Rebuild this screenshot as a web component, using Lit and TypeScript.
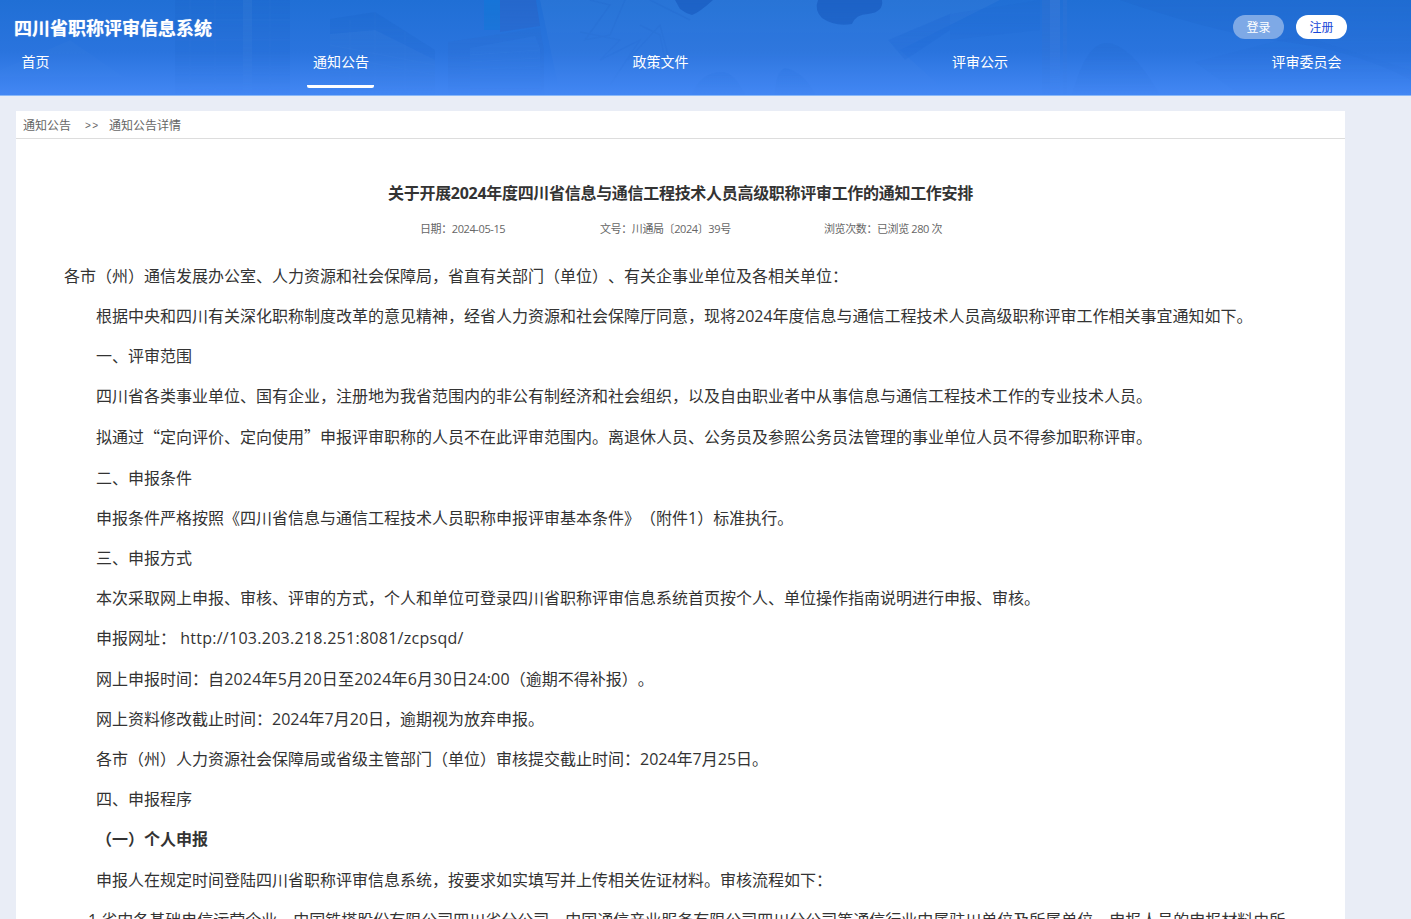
import { LitElement, html, css, svg } from "lit";
import { customElement } from "lit/decorators.js";

const art = svg`
<svg class="art" viewBox="0 0 1411 95" preserveAspectRatio="none" aria-hidden="true">
  <defs>
    <linearGradient id="fade" x1="0" y1="0" x2="0" y2="1">
      <stop offset="0" stop-color="#fff"/>
      <stop offset=".55" stop-color="#fff" stop-opacity=".6"/>
      <stop offset="1" stop-color="#fff" stop-opacity="0"/>
    </linearGradient>
    <mask id="m"><rect width="1411" height="95" fill="url(#fade)"/></mask>
  </defs>
  <g mask="url(#m)">
    <path d="M540 0 H1000 L900 50 L950 95 H560Z" fill="#fff" fill-opacity=".04"/>
    <path d="M0 70 L70 40 L150 95 H0Z" fill="#fff" fill-opacity=".025"/>
    <path d="M175 0 H290 V95 H175Z" fill="#1a5fc4" fill-opacity=".2"/>
    <path d="M243 0 H252 V95 H243Z" fill="#fff" fill-opacity=".04"/>
    <path d="M330 19 L375 12 L435 50 V95 H330Z" fill="#1a5fc4" fill-opacity=".24"/>
    <path d="M330 34 L375 30 L435 60 V95 H330Z" fill="#fff" fill-opacity=".04"/>
    <path d="M448 42 L540 28 L544 50 V95 H448Z" fill="#2a66c8" fill-opacity=".25"/>
    <path d="M470 48 L535 36 L540 48 L541 95 H470Z" fill="#3c85ea" fill-opacity=".22"/>
    <path d="M484 0 H500 V30 H484Z" fill="#0f78d8" fill-opacity=".55"/>
    <path d="M500 0 H536 L540 26 L500 32Z" fill="#2c5fc0" fill-opacity=".45"/>
    <path d="M675 0 H713 Q700 12 692 15 Q685 13 680 9Z" fill="#1a5cc0" fill-opacity=".75"/>
    <path d="M818 0 H882 Q884 12 868 14 Q856 14 852 24 Q835 27 822 18 Q814 10 818 0Z" fill="#1a5cc0" fill-opacity=".75"/>
    <path d="M888 40 L950 14 V30 L905 60Z" fill="#1a65d0" fill-opacity=".3"/>
    <path d="M950 14 L1040 0 V30 L950 40Z" fill="#1a65d0" fill-opacity=".14"/>
    <path d="M1120 0 Q1200 28 1270 40 Q1350 48 1411 80 V0Z" fill="#1a5fc4" fill-opacity=".18"/>
    <path d="M1042 0 H1050 V95 H1042Z" fill="#3f70c8" fill-opacity=".22"/>
    <path d="M1050 0 H1060 V95 H1050Z" fill="#5a85d8" fill-opacity=".28"/>
    <path d="M1063 0 H1067 V95 H1063Z" fill="#4a7ad0" fill-opacity=".18"/>
    <path d="M1072 95 Q1085 45 1105 43 Q1130 42 1160 95Z" fill="#1a5fc4" fill-opacity=".22"/>
    <path d="M1195 62 L1300 35 L1411 70 V95 H1240Z" fill="#1a5fc4" fill-opacity=".08"/>
    <path d="M692 95 Q700 72 722 72 Q735 72 745 95Z" fill="#1f68cf" fill-opacity=".3"/>
    <path d="M775 95 Q775 72 785 68 Q805 72 815 95Z" fill="#1f68cf" fill-opacity=".3"/>
    <g fill="none" stroke="#1d5fc0" stroke-opacity=".14" stroke-width="1.5">
      <path d="M590 0 L610 5 L585 40 L610 35 L625 0 M580 32 L620 40 L600 60 L640 40 L610 85 M650 0 L690 20 M640 25 L660 35 L665 60 M628 60 L660 25 L668 55 L640 70"/>
    </g>
    <g fill="none" stroke="#fff" stroke-opacity=".025">
      <path d="M190 0 V95 M215 0 V95 M270 0 V95 M175 20 H290 M175 40 H290 M175 60 H290 M350 20 V95 M375 12 V95 M405 32 V95 M330 45 L435 65 M330 55 L435 75 M470 55 L540 50 M470 62 L540 58 M470 70 L540 66"/>
    </g>
  </g>
</svg>`;

@customElement("app-root")
export class AppRoot extends LitElement {
  static styles = css`
    :host {
      display: block;
      height: 919px;
      overflow: hidden;
      background: #e9edf6;
      font-family: "Open Sans", "Noto Sans CJK SC", sans-serif;
      text-spacing-trim: space-all;
      color: #333;
    }
    .head {
      position: relative;
      height: 96px;
      box-sizing: border-box;
      border-bottom: 1px solid #8ab8f7;
      background: linear-gradient(180deg, #206fd5 0%, #2a74de 55%, #4387f4 100%);
      color: #fff;
      overflow: hidden;
    }
    .art { position: absolute; inset: 0; width: 100%; height: 100%; }
    .top {
      position: relative;
      display: flex;
      justify-content: space-between;
      padding: 15px 64px 0 14px;
      height: 40px;
      box-sizing: border-box;
    }
    .brand {
      font-family: "Noto Sans CJK SC", sans-serif;
      font-size: 18px;
      font-weight: 700;
      line-height: 26px;
      height: 26px;
      margin-top: -1px;
      text-shadow: 0 0 1px rgba(255, 255, 255, 0.6);
    }
    .auth { display: flex; gap: 12px; }
    .btn {
      width: 51px;
      height: 24px;
      border-radius: 12px;
      font-family: "Noto Sans CJK SC", sans-serif;
      font-size: 12px;
      line-height: 24px;
      text-align: center;
    }
    .login { background: #7ea9e6; color: #fff; }
    .reg { background: #fff; color: #1848d8; }
    .nav {
      position: relative;
      display: flex;
      justify-content: space-between;
      padding: 0 64.5px 0 15.5px;
      height: 48px;
      box-sizing: border-box;
    }
    .nav a {
      font-family: "Noto Sans CJK SC", sans-serif;
      font-size: 14px;
      line-height: 42px;
      padding: 0 5px 0 6px;
      height: 48px;
      box-sizing: border-box;
      color: #fff;
    }
    .nav a.on { border-bottom: 3px solid #fff; border-radius: 0 0 2px 2px; }
    .panel {
      margin: 15px 66px 0 16px;
      background: #fff;
      height: 809px;
      overflow: hidden;
    }
    .crumb {
      height: 28px;
      box-sizing: border-box;
      border-bottom: 1px solid #ddd;
      padding-left: 7px;
      display: flex;
      font-family: "Noto Sans CJK SC", sans-serif;
      font-size: 12px;
      line-height: 27px;
      color: #666;
    }
    .sep {
      width: 14px;
      margin: 1px 10px 0 14px;
      font-size: 10px;
      font-family: "Liberation Sans", sans-serif;
      letter-spacing: 1.5px;
    }
    h1 {
      margin: 40px 0 0;
      font-size: 16px;
      font-weight: 700;
      line-height: 28px;
      letter-spacing: -0.3px;
      text-align: center;
      color: #333;
    }
    .meta {
      display: flex;
      margin: 12px 0 0;
      font-size: 11px;
      line-height: 20px;
      letter-spacing: -0.4px;
      color: #666;
    }
    .meta span:nth-child(1) { margin-left: 404px; width: 180px; }
    .meta span:nth-child(2) { width: 224px; }
    .body { padding: 16.6px 48px 0 48px; }
    .body p {
      margin: 0;
      font-size: 16px;
      line-height: 40.2px;
      white-space: nowrap;
      color: #333;
    }
    .body p.in { padding-left: 32px; }
    .body p.bold { padding-left: 32px; font-weight: 700; }
    .body p.last { padding-left: 24px; }
    .cjk { font-family: "Noto Sans CJK SC", sans-serif; }
    .url { letter-spacing: 0.27px; }
    .dates { letter-spacing: 0.18px; }
  `;

  render() {
    return html`
      <header class="head">
        ${art}
        <div class="top">
          <div class="brand">四川省职称评审信息系统</div>
          <div class="auth">
            <div class="btn login">登录</div>
            <div class="btn reg">注册</div>
          </div>
        </div>
        <nav class="nav">
          <a>首页</a><a class="on">通知公告</a><a>政策文件</a><a>评审公示</a><a>评审委员会</a>
        </nav>
      </header>
      <main class="panel">
        <div class="crumb"><span>通知公告</span><span class="sep">&gt;&gt;</span><span>通知公告详情</span></div>
        <h1>关于开展2024年度四川省信息与通信工程技术人员高级职称评审工作的通知工作安排</h1>
        <div class="meta"><span>日期：2024-05-15</span><span>文号：川通局〔2024〕39号</span><span>浏览次数：已浏览 280 次</span></div>
        <div class="body">
          <p>各市（州）通信发展办公室、人力资源和社会保障局，省直有关部门（单位）、有关企事业单位及各相关单位：</p>
          <p class="in">根据中央和四川有关深化职称制度改革的意见精神，经省人力资源和社会保障厅同意，现将2024年度信息与通信工程技术人员高级职称评审工作相关事宜通知如下。</p>
          <p class="in">一、评审范围</p>
          <p class="in">四川省各类事业单位、国有企业，注册地为我省范围内的非公有制经济和社会组织，以及自由职业者中从事信息与通信工程技术工作的专业技术人员。</p>
          <p class="in">拟通过<span class="cjk">“</span>定向评价、定向使用<span class="cjk">”</span>申报评审职称的人员不在此评审范围内。离退休人员、公务员及参照公务员法管理的事业单位人员不得参加职称评审。</p>
          <p class="in">二、申报条件</p>
          <p class="in">申报条件严格按照《四川省信息与通信工程技术人员职称申报评审基本条件》（附件1）标准执行。</p>
          <p class="in">三、申报方式</p>
          <p class="in">本次采取网上申报、审核、评审的方式，个人和单位可登录四川省职称评审信息系统首页按个人、单位操作指南说明进行申报、审核。</p>
          <p class="in">申报网址： <span class="url">http://103.203.218.251:8081/zcpsqd/</span></p>
          <p class="in">网上申报时间：<span class="dates">自2024年5月20日至2024年6月30日24:00</span>（逾期不得补报）。</p>
          <p class="in">网上资料修改截止时间：2024年7月20日，逾期视为放弃申报。</p>
          <p class="in">各市（州）人力资源社会保障局或省级主管部门（单位）审核提交截止时间：2024年7月25日。</p>
          <p class="in">四、申报程序</p>
          <p class="bold">（一）个人申报</p>
          <p class="in">申报人在规定时间登陆四川省职称评审信息系统，按要求如实填写并上传相关佐证材料。审核流程如下：</p>
          <p class="last">1.省内各基础电信运营企业、中国铁塔股份有限公司四川省分公司、中国通信产业服务有限公司四川分公司等通信行业中属驻川单位及所属单位，申报人员的申报材料由所</p>
        </div>
      </main>
    `;
  }
}
